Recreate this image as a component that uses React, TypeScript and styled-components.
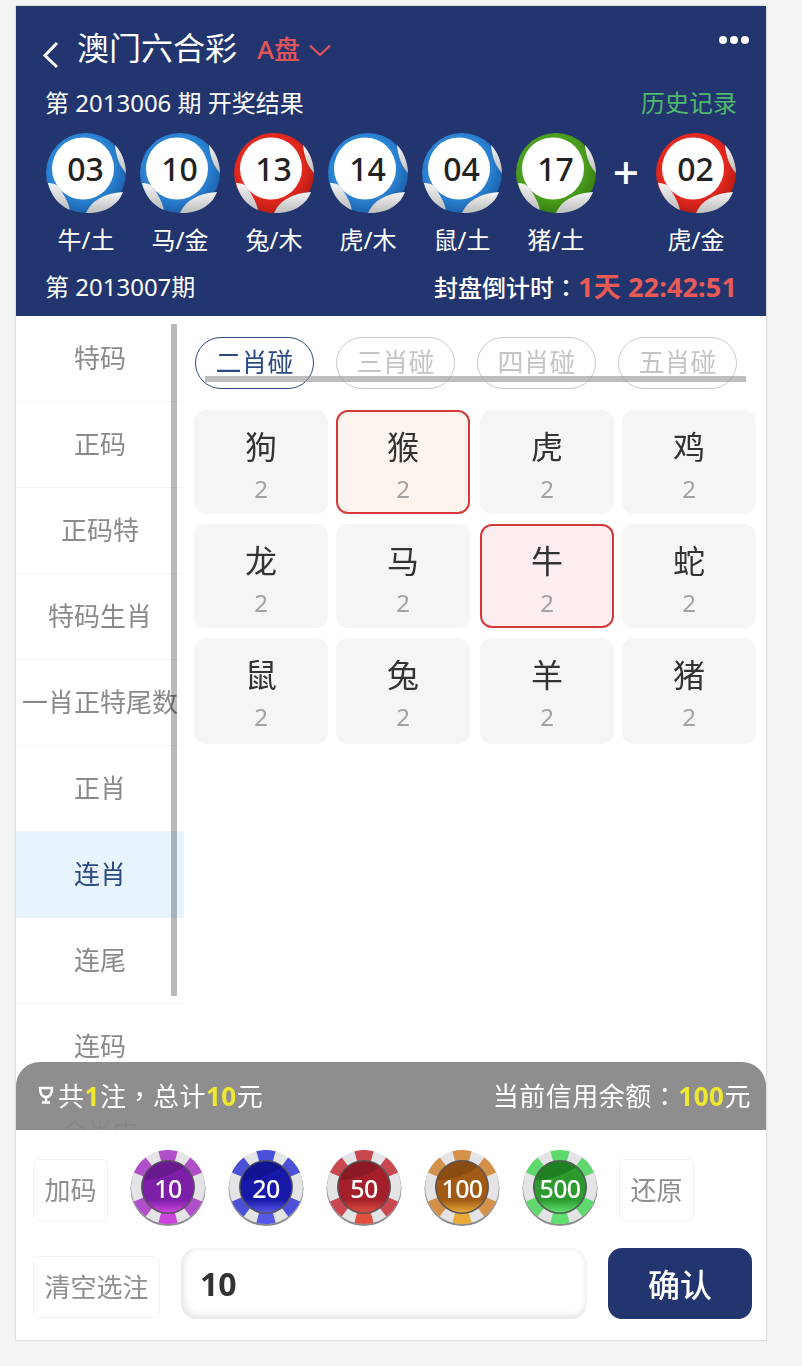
import React from 'react';
import styled, { createGlobalStyle } from 'styled-components';

const Global = createGlobalStyle`
  html, body { margin: 0; padding: 0; background: #f3f4f4; }
  body { font-family: "Noto Sans", "Noto Sans CJK SC", sans-serif; }
  * { box-sizing: border-box; }
`;

const Page = styled.div`
  width: 802px;
  height: 1366px;
  padding: 6px 36px 26px 16px;
  overflow: hidden;
`;
const Card = styled.div`
  position: relative;
  width: 750px;
  height: 1334px;
  background: #fff;
  overflow: hidden;
  box-shadow: 0 0 2px rgba(0, 0, 0, 0.28);
  filter: blur(0.55px);
`;
const Header = styled.header`
  height: 310px;
  background: #22356e;
  padding: 12px 29px 0 30px;
  color: #fff;
`;
const TitleRow = styled.div`
  display: flex;
  align-items: center;
  height: 64px;
  margin-left: -4px;
`;
const BackIcon = styled.svg`
  margin-top: 10px;
  flex: none;
`;
const Title = styled.h1`
  margin: 0 20px 4px 17px;
  font-size: 32px;
  font-weight: 400;
  line-height: 1;
`;
const Plate = styled.span`
  font-size: 26px;
  font-weight: 500;
  color: #e2545a;
  margin: 0 9px 4px 0;
`;
const Dots = styled.div`
  display: flex;
  gap: 3px;
  margin: -20px -12px 0 auto;
  i { width: 8px; height: 8px; border-radius: 50%; background: #fff; }
`;
const InfoRow = styled.div<{ $h: number; $mt?: number }>`
  display: flex;
  align-items: center;
  justify-content: space-between;
  height: ${p => p.$h}px;
  margin: ${p => p.$mt ?? 0}px 0 0 -1px;
  padding-bottom: ${p => (p.$mt ? 3 : 5)}px;
  font-size: 24px;
  white-space: nowrap;
`;
const History = styled.span`
  color: #4fb96c;
`;
const Balls = styled.div`
  display: flex;
  gap: 14px;
  margin-top: 7px;
`;
const BallItem = styled.div`
  width: 80px;
  display: flex;
  flex-direction: column;
  align-items: center;
`;
const BallFace = styled.div`
  position: relative;
  width: 80px;
  height: 80px;
  svg { display: block; }
`;
const BallNumber = styled.span`
  position: absolute;
  left: 0;
  top: -5px;
  width: 79px;
  height: 80px;
  display: flex;
  align-items: center;
  justify-content: center;
  color: #222;
  font-size: 32px;
  font-weight: 500;
`;
const BallLabel = styled.span`
  margin-top: 9px;
  height: 36px;
  line-height: 36px;
  font-size: 24px;
  white-space: nowrap;
`;
const Plus = styled.div`
  width: 32px;
  height: 80px;
  display: flex;
  align-items: center;
  justify-content: center;
  font-size: 46px;
  font-weight: 500;
  padding-bottom: 4px;
`;
const Punct = styled.span`
  font-family: "Noto Sans CJK TC", sans-serif;
`;
const Countdown = styled.span`
  font-weight: 500;
  em {
    font-style: normal;
    color: #e85a55;
    font-size: 27px;
    font-weight: 700;
    letter-spacing: 0.15px;
  }
`;
const Body = styled.div`
  position: relative;
  display: flex;
  height: 1024px;
`;
const Sidebar = styled.nav`
  width: 168px;
  flex: none;
`;
const SideItem = styled.div<{ $active?: boolean }>`
  height: 86px;
  display: flex;
  align-items: center;
  justify-content: center;
  padding-bottom: 4px;
  border-bottom: 1px solid ${p => (p.$active ? '#e8f4fd' : '#f4f4f4')};
  background: ${p => (p.$active ? '#e8f4fd' : '#fff')};
  color: ${p => (p.$active ? '#2b4a85' : '#8a8a8a')};
  font-size: 26px;
  white-space: nowrap;
`;
const VScroll = styled.div`
  position: absolute;
  left: 155px;
  top: 8px;
  width: 6px;
  height: 672px;
  background: rgba(0, 0, 0, 0.27);
`;
const HScroll = styled.div`
  position: absolute;
  left: 189px;
  top: 60px;
  width: 541px;
  height: 6px;
  background: rgba(150, 150, 150, 0.62);
`;
const Main = styled.main`
  flex: 1;
  padding: 21px 0 0 11px;
`;
const Tabs = styled.div`
  display: flex;
  gap: 22px;
`;
const Tab = styled.div<{ $active?: boolean }>`
  width: 119px;
  height: 52px;
  border-radius: 26px;
  display: flex;
  align-items: center;
  justify-content: center;
  padding-bottom: 5px;
  border: 1.5px solid ${p => (p.$active ? '#2b4a85' : '#c9c9c9')};
  color: ${p => (p.$active ? '#2b4a85' : '#c4c4c4')};
  font-size: 26px;
`;
const Grid = styled.div`
  display: grid;
  grid-template-columns: 142px 144px 142px 134px;
  grid-template-rows: 104px 104px 106px;
  row-gap: 10px;
  margin: 21px 0 0 -1px;
`;
const Cell = styled.div<{ $border?: string; $bg?: string }>`
  width: 134px;
  display: flex;
  flex-direction: column;
  align-items: center;
  padding-top: 14px;
  border-radius: 12px;
  background: ${p => p.$bg ?? '#f5f5f5'};
  border: ${p => (p.$border ? `2px solid ${p.$border}` : '2px solid transparent')};
`;
const Zodiac = styled.span`
  font-size: 32px;
  line-height: 42px;
  color: #333;
`;
const Odds = styled.span`
  font-size: 24px;
  line-height: 40px;
  margin-top: 1px;
  color: #a3a3a3;
`;
const Dock = styled.footer`
  position: absolute;
  left: 0;
  right: 0;
  bottom: 0;
`;
const SummaryBar = styled.div`
  height: 68px;
  display: flex;
  align-items: center;
  justify-content: space-between;
  padding: 0 15px 2px 20px;
  border-radius: 24px 24px 0 0;
  background: rgba(136, 136, 136, 0.95);
  color: #fff;
  font-size: 26px;
  letter-spacing: 0.5px;
  b { color: #eee92f; font-weight: 700; }
`;
const SummaryLeft = styled.span`
  display: flex;
  align-items: center;
  gap: 2px;
`;
const Controls = styled.div`
  height: 210px;
  background: #fff;
  padding: 20px 14px 0 17px;
`;
const ChipRow = styled.div`
  display: flex;
  align-items: center;
  height: 76px;
  gap: 22px;
`;
const Ghost = styled.button<{ $w: number; $mt: number }>`
  width: ${p => p.$w}px;
  height: 62px;
  margin-top: ${p => p.$mt}px;
  padding: 0 0 2px;
  flex: none;
  background: #fff;
  border: 1px solid #f1f1f1;
  border-radius: 6px;
  color: #8f8f8f;
  font-family: inherit;
  font-size: 26px;
`;
const Chip = styled.div`
  position: relative;
  width: 76px;
  height: 76px;
  flex: none;
  svg { display: block; }
`;
const ChipValue = styled.span`
  position: absolute;
  inset: 0;
  display: flex;
  align-items: center;
  justify-content: center;
  color: #fff;
  font-size: 25px;
  font-weight: 500;
  letter-spacing: -0.6px;
`;
const ChipsWrap = styled.div`
  display: flex;
  gap: 22px;
  margin-right: -1px;
`;
const StakeRow = styled.div`
  display: flex;
  align-items: center;
  margin-top: 22px;
  height: 71px;
`;
const StakeInput = styled.div`
  width: 406px;
  height: 71px;
  margin: 0 21px 0 21px;
  padding: 0 0 0 19px;
  display: flex;
  align-items: center;
  border-radius: 16px;
  background: #fff;
  box-shadow: inset 3px -3px 9px rgba(0, 0, 0, 0.1), inset -2px 0 6px rgba(0, 0, 0, 0.05);
  color: #333;
  font-size: 32px;
  font-weight: 700;
`;
const Confirm = styled.button`
  width: 144px;
  height: 71px;
  border: none;
  padding: 0 0 2px;
  border-radius: 14px;
  background: #22356e;
  color: #fff;
  font-family: inherit;
  font-size: 32px;
  font-weight: 500;
`;

const ballColors: Record<string, [string, string]> = {
  blue: ['#2b83d4', '#1c62ad'],
  red: ['#e5281e', '#b81d16'],
  green: ['#4b9f1e', '#37800f'],
};

function Ball({ id, n, color }: { id: string; n: string; color: string }) {
  const [c, d] = ballColors[color];
  return (
    <BallFace>
      <svg width="80" height="80" viewBox="0 0 80 80">
        <defs>
          <radialGradient id={`b${id}`} cx="45%" cy="42%" r="58%">
            <stop offset="70%" stopColor={c} />
            <stop offset="100%" stopColor={d} />
          </radialGradient>
          <linearGradient id={`w${id}`} x1="0" y1="0" x2="0" y2="1">
            <stop offset="0%" stopColor="#f4f4f4" />
            <stop offset="100%" stopColor="#bdbdbd" />
          </linearGradient>
        </defs>
        <circle cx="40" cy="40" r="40" fill={`url(#b${id})`} />
        <circle cx="37" cy="35.500" r="31" fill="#fff" />
        <path d="M69 12C75 18 79.500 28 80 40C74 34 70 24 69 12Z" fill={`url(#w${id})`} />
        <path d="M2 50C8 50 12 52 14 56C18 62 22 68 24 77C12 72 5 62 2 50Z" fill={`url(#w${id})`} />
        <path d="M40 80C45 68 58 60 77 59C72 73 57 81 40 80Z" fill={`url(#w${id})`} />
      </svg>
      <BallNumber>{n}</BallNumber>
    </BallFace>
  );
}

function arc(a0: number, a1: number, r0: number, r1: number) {
  const p = (a: number, r: number) => {
    const t = (a * Math.PI) / 180;
    return `${(38 + r * Math.sin(t)).toFixed(2)} ${(37 - r * Math.cos(t)).toFixed(2)}`;
  };
  return `M${p(a0, r1)}A${r1} ${r1} 0 0 1 ${p(a1, r1)}L${p(a1, r0)}A${r0} ${r0} 0 0 0 ${p(a0, r0)}Z`;
}

const chipAngles = [0, 52, 128, 180, 232, 308];

function PokerChip({ v, rim, hot, dark, mid }: { v: string; rim: string; hot: string; dark: string; mid: string }) {
  const id = `c${v}`;
  return (
    <Chip>
      <svg width="76" height="76" viewBox="0 0 76 76">
        <defs>
          <linearGradient id={id} x1="0" y1="0" x2="0" y2="1">
            <stop offset="0%" stopColor={mid} />
            <stop offset="75%" stopColor={mid} />
            <stop offset="100%" stopColor={hot} />
          </linearGradient>
        </defs>
        <circle cx="38" cy="38.500" r="37.500" fill="#8a8a8d" />
        <circle cx="38" cy="37" r="37" fill="#e4e4e6" />
        {chipAngles.map(a => (
          <path key={a} d={arc(a - 15, a + 15, 26, 37)} fill={a === 180 ? hot : rim} />
        ))}
        <circle cx="38" cy="37" r="27" fill="#55555a" />
        <circle cx="38" cy="37" r="25.500" fill={`url(#${id})`} />
        <path d="M13.500 30C28 30 44 24 54 17C47 12.500 42 11.500 38 11.500C26 11.500 16 19 13.500 30Z" fill={dark} opacity="0.6" />
      </svg>
      <ChipValue>{v}</ChipValue>
    </Chip>
  );
}

const balls = [
  ['03', 'blue', '牛/土'],
  ['10', 'blue', '马/金'],
  ['13', 'red', '兔/木'],
  ['14', 'blue', '虎/木'],
  ['04', 'blue', '鼠/土'],
  ['17', 'green', '猪/土'],
];
const menu = ['特码', '正码', '正码特', '特码生肖', '一肖正特尾数', '正肖', '连肖', '连尾', '连码', '合肖中'];
const cells = ['狗', '猴', '虎', '鸡', '龙', '马', '牛', '蛇', '鼠', '兔', '羊', '猪'];

export default function App() {
  return (
    <>
      <Global />
      <Page>
        <Card>
          <Header>
            <TitleRow>
              <BackIcon width="18" height="28" viewBox="0 0 18 28" fill="none" stroke="#fff" strokeWidth="3">
                <path d="M15 2L3 14.500L15 26" />
              </BackIcon>
              <Title>澳门六合彩</Title>
              <Plate>A盘</Plate>
              <svg width="22" height="13" viewBox="0 0 22 13" fill="none" stroke="#e2545a" strokeWidth="2.200">
                <path d="M1 1.500L11 11L21 1.500" />
              </svg>
              <Dots><i /><i /><i /></Dots>
            </TitleRow>
            <InfoRow $h={44}>
              <span>第 2013006 期 开奖结果</span>
              <History>历史记录</History>
            </InfoRow>
            <Balls>
              {balls.map(([n, c, l], i) => (
                <BallItem key={i}>
                  <Ball id={String(i)} n={n} color={c} />
                  <BallLabel>{l}</BallLabel>
                </BallItem>
              ))}
              <Plus>+</Plus>
              <BallItem>
                <Ball id="s" n="02" color="red" />
                <BallLabel>虎/金</BallLabel>
              </BallItem>
            </Balls>
            <InfoRow $h={40} $mt={9}>
              <span>第 2013007期</span>
              <Countdown>封盘倒计时<Punct>：</Punct><em>1天 22:42:51</em></Countdown>
            </InfoRow>
          </Header>
          <Body>
            <Sidebar>
              {menu.map(m => (
                <SideItem key={m} $active={m === '连肖'}>{m}</SideItem>
              ))}
            </Sidebar>
            <VScroll />
            <Main>
              <Tabs>
                <Tab $active>二肖碰</Tab>
                <Tab>三肖碰</Tab>
                <Tab>四肖碰</Tab>
                <Tab>五肖碰</Tab>
              </Tabs>
              <Grid>
                {cells.map(c => (
                  <Cell
                    key={c}
                    $border={c === '猴' || c === '牛' ? '#d5393a' : undefined}
                    $bg={c === '猴' ? '#fbf3ee' : c === '牛' ? '#fceeee' : undefined}
                  >
                    <Zodiac>{c}</Zodiac>
                    <Odds>2</Odds>
                  </Cell>
                ))}
              </Grid>
            </Main>
            <HScroll />
          </Body>
          <Dock>
            <SummaryBar>
              <SummaryLeft>
                <svg width="20" height="20" viewBox="0 0 20 20" fill="none" stroke="#fff" strokeWidth="2.400">
                  <path d="M4 3H16C16 9 14 12 10 12C6 12 4 9 4 3Z" />
                  <path d="M10 12V17M6 17.500H14" />
                </svg>
                <span>共<b>1</b>注<Punct>，</Punct>总计<b>10</b>元</span>
              </SummaryLeft>
              <span>当前信用余额<Punct>：</Punct><b>100</b>元</span>
            </SummaryBar>
            <Controls>
              <ChipRow>
                <Ghost $w={75} $mt={3}>加码</Ghost>
                <ChipsWrap>
                  <PokerChip v="10" rim="#b04fc9" hot="#cc45dd" dark="#5c1580" mid="#7c1fa6" />
                  <PokerChip v="20" rim="#4b50d8" hot="#5658e6" dark="#0f1280" mid="#1618a8" />
                  <PokerChip v="50" rim="#c9474f" hot="#e0503f" dark="#7a1620" mid="#a3202a" />
                  <PokerChip v="100" rim="#d4914a" hot="#e8a93a" dark="#7c430f" mid="#a15a14" />
                  <PokerChip v="500" rim="#5fd86d" hot="#5fe070" dark="#17701a" mid="#2c9a2e" />
                </ChipsWrap>
                <Ghost $w={75} $mt={3}>还原</Ghost>
              </ChipRow>
              <StakeRow>
                <Ghost $w={127} $mt={6}>清空选注</Ghost>
                <StakeInput>10</StakeInput>
                <Confirm>确认</Confirm>
              </StakeRow>
            </Controls>
          </Dock>
        </Card>
      </Page>
    </>
  );
}
